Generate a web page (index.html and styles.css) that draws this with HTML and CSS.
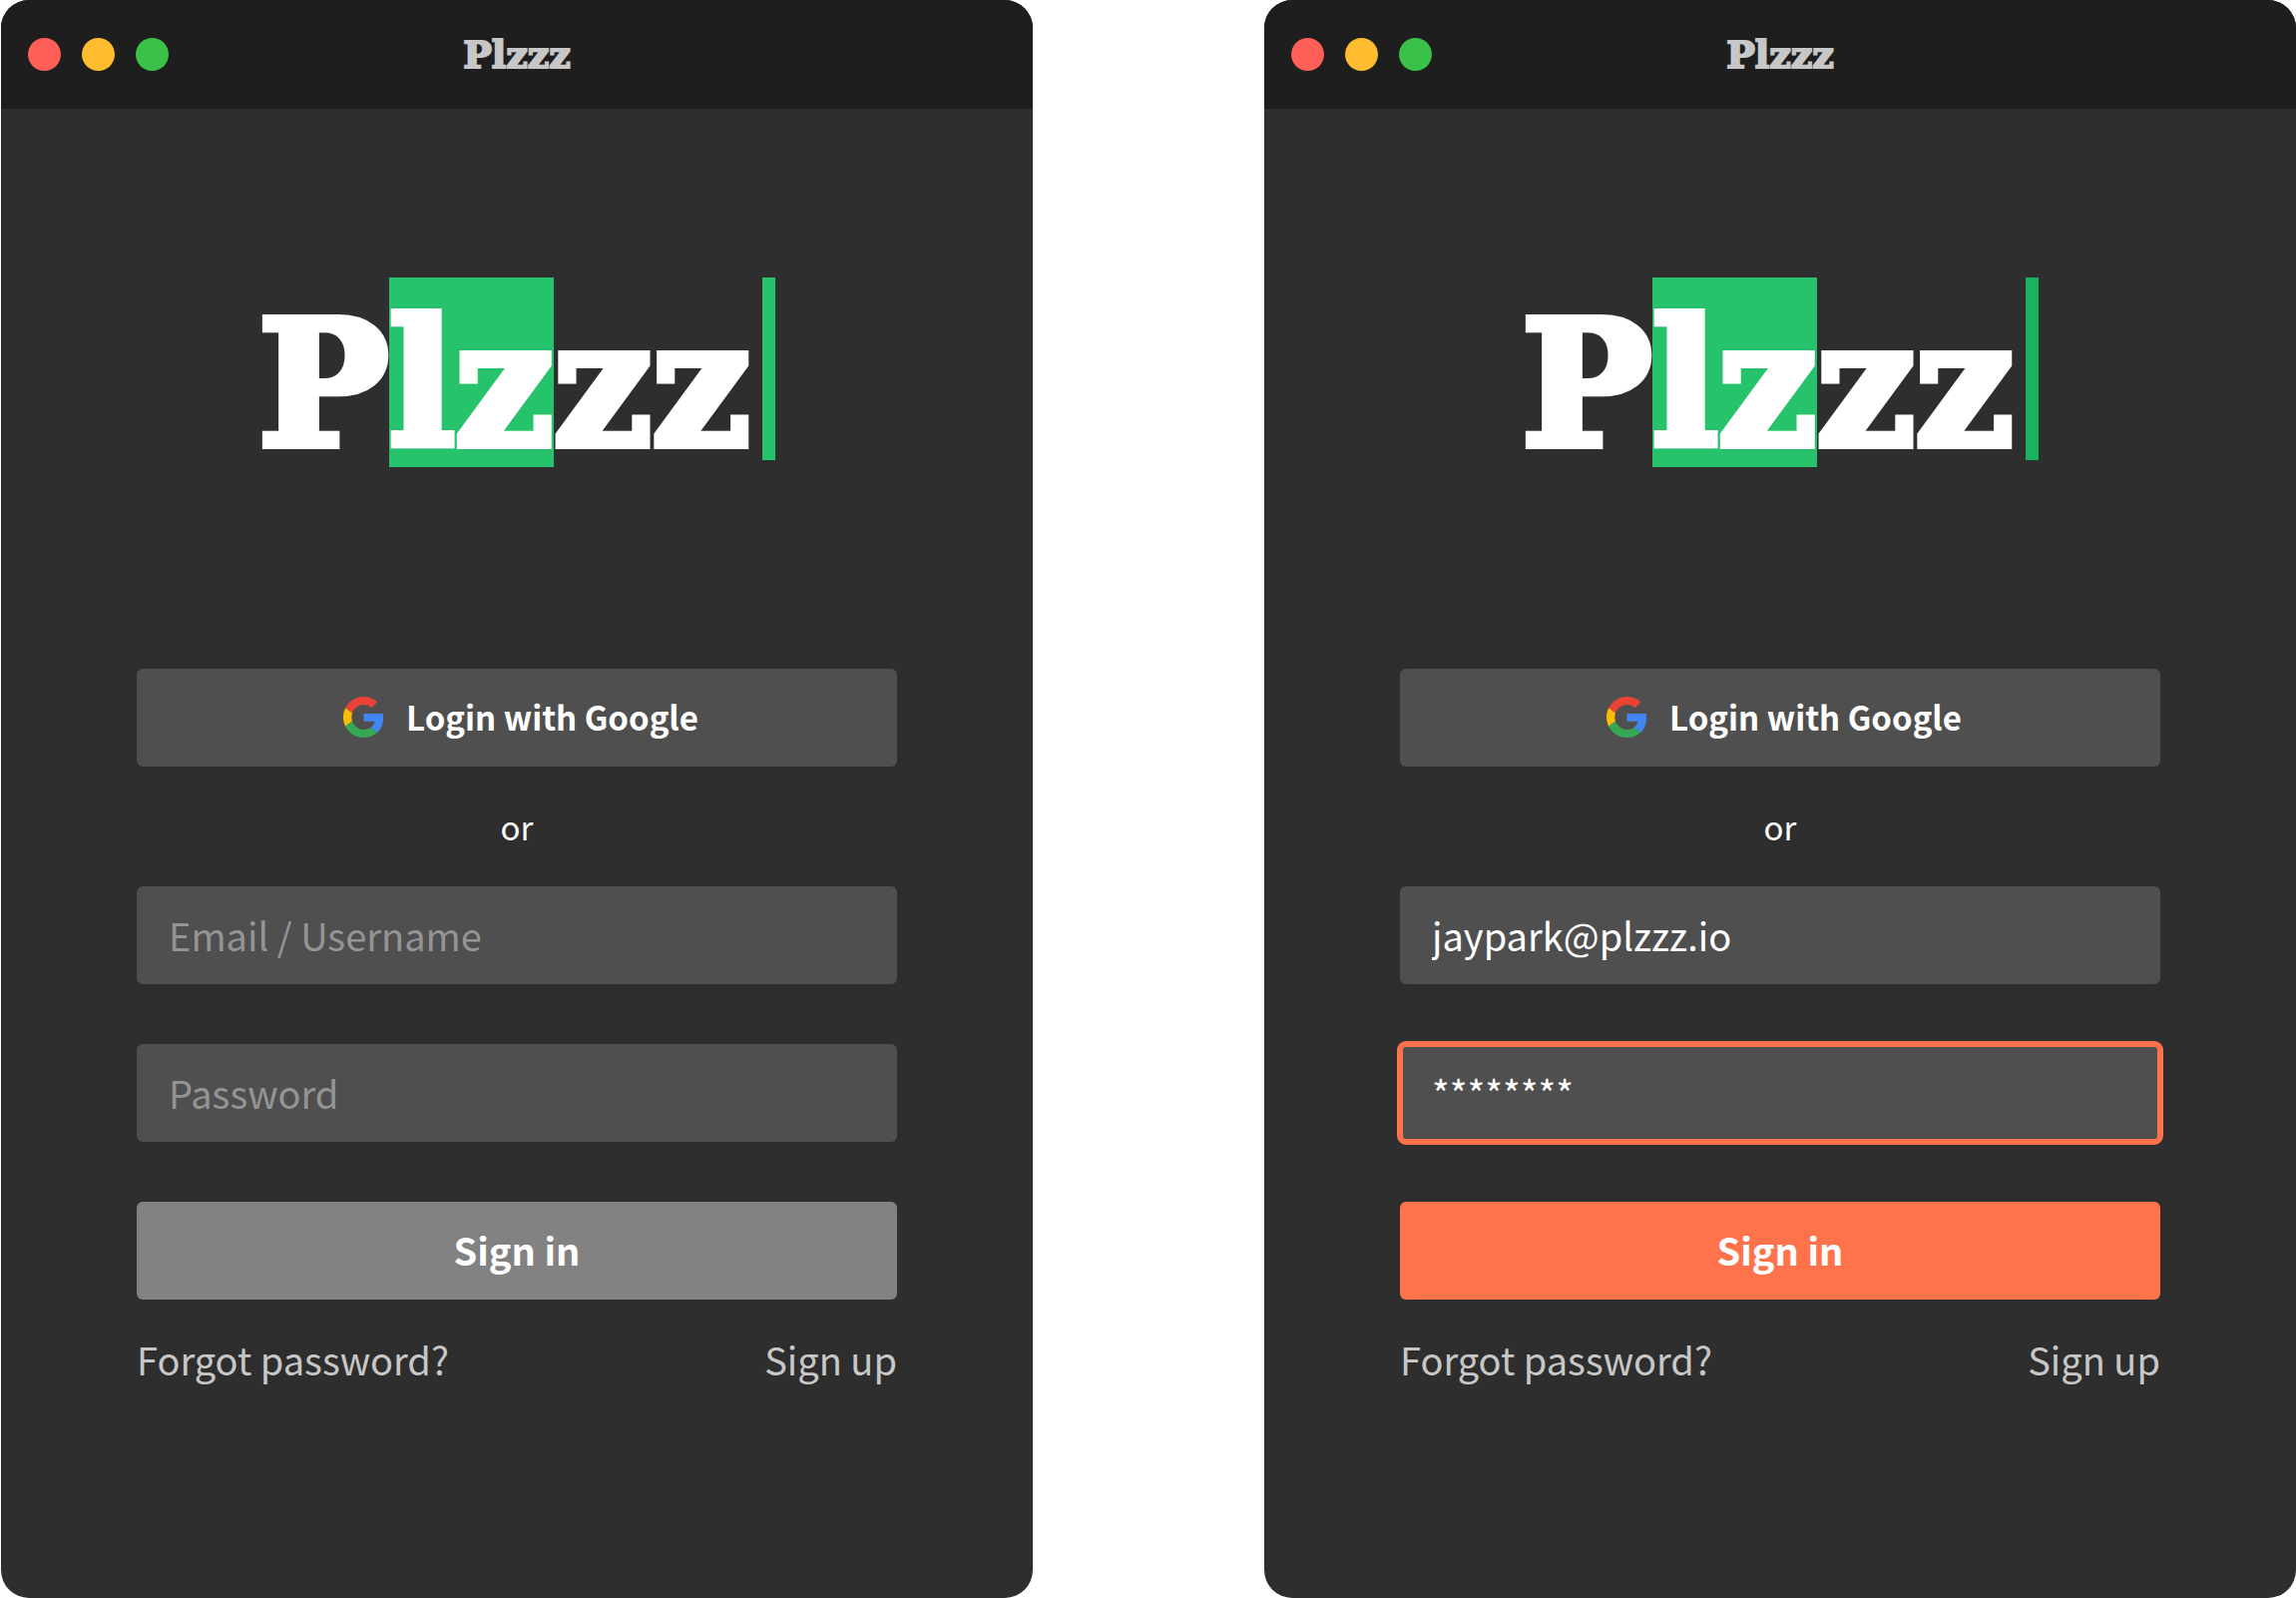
FILE: index.html
```html
<!DOCTYPE html>
<html lang="en">
<head>
    <meta charset="UTF-8">
    <meta name="viewport" content="width=device-width, initial-scale=1.0">
    <title>Plzzz</title>
    <link rel="stylesheet" href="styles.css">
</head>
<body>
    <!-- Shared Google mark -->
    <svg class="sprite" aria-hidden="true">
        <symbol id="google" viewBox="0 0 48 48">
            <path fill="#EA4335" d="M24 9.5c3.54 0 6.71 1.22 9.21 3.6l6.85-6.85C35.9 2.38 30.47 0 24 0 14.62 0 6.51 5.38 2.56 13.22l7.98 6.19C12.43 13.72 17.74 9.5 24 9.5z"/>
            <path fill="#4285F4" d="M46.98 24.55c0-1.57-.15-3.09-.38-4.55H24v9.02h12.94c-.58 2.96-2.26 5.48-4.78 7.18l7.73 6c4.51-4.18 7.09-10.36 7.09-17.65z"/>
            <path fill="#FBBC05" d="M10.53 28.59c-.48-1.45-.76-2.99-.76-4.59s.27-3.14.76-4.59l-7.98-6.19C.92 16.46 0 20.12 0 24c0 3.88.92 7.54 2.56 10.78l7.97-6.19z"/>
            <path fill="#34A853" d="M24 48c6.48 0 11.93-2.13 15.89-5.81l-7.73-6c-2.15 1.45-4.92 2.3-8.16 2.3-6.26 0-11.57-4.22-13.47-9.91l-7.98 6.19C6.51 42.62 14.62 48 24 48z"/>
        </symbol>
    </svg>

    <main class="screens">
        <!-- Empty form -->
        <section class="window">
            <header class="titlebar">
                <div class="dots">
                    <span class="dot red"></span>
                    <span class="dot yellow"></span>
                    <span class="dot green"></span>
                </div>
                <div class="title">Plzzz</div>
            </header>

            <div class="content">
                <h1 class="logo"><span>P</span><mark>lz</mark><span>zz</span><i class="cursor"></i></h1>

                <form class="form">
                    <button type="button" class="btn google">
                        <svg class="google-icon" aria-hidden="true"><use href="#google"/></svg>
                        <span>Login with Google</span>
                    </button>
                    <p class="or">or</p>
                    <input class="field" type="text" placeholder="Email / Username" aria-label="Email / Username">
                    <input class="field" type="password" placeholder="Password" aria-label="Password">
                    <button type="submit" class="btn submit">Sign in</button>
                    <div class="links">
                        <a href="#">Forgot password?</a>
                        <a href="#">Sign up</a>
                    </div>
                </form>
            </div>
        </section>

        <!-- Filled form -->
        <section class="window">
            <header class="titlebar">
                <div class="dots">
                    <span class="dot red"></span>
                    <span class="dot yellow"></span>
                    <span class="dot green"></span>
                </div>
                <div class="title">Plzzz</div>
            </header>

            <div class="content">
                <h1 class="logo"><span>P</span><mark>lz</mark><span>zz</span><i class="cursor dark"></i></h1>

                <form class="form">
                    <button type="button" class="btn google">
                        <svg class="google-icon" aria-hidden="true"><use href="#google"/></svg>
                        <span>Login with Google</span>
                    </button>
                    <p class="or">or</p>
                    <input class="field" type="text" value="jaypark@plzzz.io" aria-label="Email / Username">
                    <input class="field active" type="text" value="********" aria-label="Password">
                    <button type="submit" class="btn submit ready">Sign in</button>
                    <div class="links">
                        <a href="#">Forgot password?</a>
                        <a href="#">Sign up</a>
                    </div>
                </form>
            </div>
        </section>
    </main>
</body>
</html>
```
FILE: styles.css
```css
* {
    box-sizing: border-box;
}

body {
    margin: 0;
    background: #fff;
    color: #fff;
    font-family: "Noto Sans CJK SC", "Noto Sans", sans-serif;
    font-size: 38px;
}

.sprite {
    display: none;
}

.screens {
    display: grid;
    grid-template-columns: 1fr 1fr;
    gap: 232px;
    min-height: 100vh;
    padding-left: 1px;
}

.window {
    background: #2e2e2e;
    border-radius: 28px;
    overflow: hidden;
}

.titlebar {
    display: grid;
    grid-template-columns: 1fr auto 1fr;
    align-items: center;
    height: 109px;
    padding: 0 27px;
    background: #1e1e1e;
}

.dots {
    display: flex;
    gap: 21px;
}

.dot {
    width: 33px;
    height: 33px;
    border-radius: 50%;
}

.red {
    background: #ff5f57;
}

.yellow {
    background: #ffbc2e;
}

.green {
    background: #3ac14a;
}

.title {
    color: #c7c7c7;
    font-family: "DejaVu Serif", serif;
    font-size: 38px;
    font-weight: bold;
    line-height: 48px;
    -webkit-text-stroke: 2px #c7c7c7;
}

.content {
    padding: 169px 136px 0;
}

.logo {
    display: flex;
    justify-content: center;
    height: 190px;
    margin: 0 0 202px;
    font-family: "DejaVu Serif", serif;
    font-size: 174px;
    font-weight: bold;
    line-height: 214px;
    -webkit-text-stroke: 8px #fff;
}

.logo mark {
    background: #27c26c;
    color: #fff;
}

.cursor {
    width: 13px;
    height: 183px;
    margin-left: 12px;
    background: #27c26c;
}

.cursor.dark {
    background: #19b35f;
}

.form {
    display: flex;
    flex-direction: column;
}

.btn,
.field {
    width: 100%;
    height: 98px;
    border: none;
    border-radius: 6px;
    background: #4f4f4f;
    color: #fff;
    font-family: inherit;
    font-size: 38px;
}

.btn {
    display: flex;
    align-items: center;
    justify-content: center;
    padding: 0 0 3px;
    font-weight: bold;
}

.google {
    gap: 22px;
    padding: 0 0 2px 8px;
    font-size: 33px;
}

.google-icon {
    width: 41px;
    height: 41px;
}

.or {
    margin: 36px 0;
    font-size: 33px;
    line-height: 48px;
    text-align: center;
}

.field {
    margin-bottom: 60px;
    padding: 0 32px 2px;
}

.field::placeholder {
    color: #949494;
    opacity: 1;
}

.field.active {
    outline: 6px solid #ff734c;
    outline-offset: -3px;
}

.submit {
    background: #828282;
}

.submit.ready {
    background: #ff734c;
}

.links {
    display: flex;
    justify-content: space-between;
    margin-top: 32px;
    line-height: 56px;
}

.links a {
    color: #c7c7c7;
    text-decoration: none;
}
```
